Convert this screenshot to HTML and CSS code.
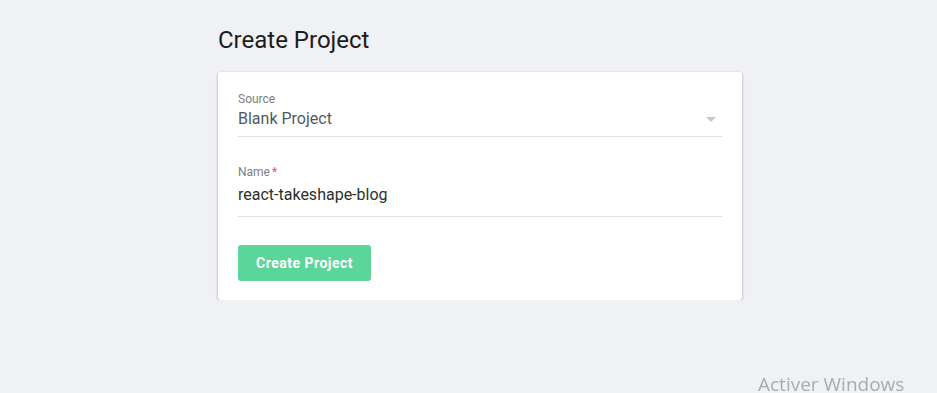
FILE: index.html
```html
<!DOCTYPE html>
<html lang="en">
<head>
    <meta charset="UTF-8">
    <title>Create Project</title>
    <link rel="stylesheet" href="styles.css">
</head>
<body>

<div class="page">
    <h1 class="title">Create Project</h1>

    <form class="card">
        <div class="field field-select">
            <label class="field-label">Source</label>
            <div class="field-value select-value">
                <span>Blank Project</span>
                <span class="caret"></span>
            </div>
        </div>

        <div class="field field-text">
            <label class="field-label">Name<span class="required">*</span></label>
            <div class="field-value text-value">react-takeshape-blog</div>
        </div>

        <button type="button" class="button">Create Project</button>
    </form>
</div>

<div class="watermark">Activer Windows</div>

</body>
</html>
```

FILE: styles.css
```css
body {
    font-family: Roboto, "Liberation Sans", sans-serif;
    background-color: #eff1f4;
    margin: 0;
    padding: 0;
}
.page {
    padding: 26px 0 0 218px;
    width: 524px;
}
.title {
    margin: 0 0 18px;
    font-size: 24px;
    line-height: 28px;
    font-weight: 400;
    color: #1c1c1c;
}
.card {
    background-color: #fff;
    border-radius: 3px;
    box-shadow: 0 1px 3px rgba(0, 0, 0, 0.35);
    padding: 20px 20px 19px;
}
.field {
    border-bottom: 1px solid #dcdfe3;
}
.field-label {
    display: block;
    font-size: 12px;
    line-height: 14px;
    color: #7b7f84;
}
.required {
    color: #e0535f;
    margin-left: 2px;
}
.field-select {
    padding-top: 0;
    padding-bottom: 5px;
}
.select-value {
    display: flex;
    justify-content: space-between;
    align-items: center;
    font-size: 16px;
    line-height: 24px;
    color: #4d5a66;
    margin-top: 1px;
}
.caret {
    width: 0;
    height: 0;
    border-left: 5px solid transparent;
    border-right: 5px solid transparent;
    border-top: 5px solid #c4c8cc;
    margin-right: 6px;
}
.field-text {
    margin-top: 28px;
    padding-bottom: 9px;
}
.text-value {
    font-size: 16px;
    line-height: 24px;
    color: #2e2e2e;
    margin-top: 4px;
}
.button {
    margin-top: 28px;
    background-color: #5cd59b;
    color: #fff;
    border: none;
    border-radius: 3px;
    padding: 0 18px;
    height: 36px;
    font-family: Roboto, "Liberation Sans", sans-serif;
    font-size: 14px;
    font-weight: 700;
    letter-spacing: 0.5px;
    cursor: pointer;
}
.watermark {
    position: fixed;
    left: 758px;
    top: 372px;
    font-family: "Open Sans", "Noto Sans", sans-serif;
    font-size: 19px;
    line-height: 24px;
    color: #a9abad;
}
```
